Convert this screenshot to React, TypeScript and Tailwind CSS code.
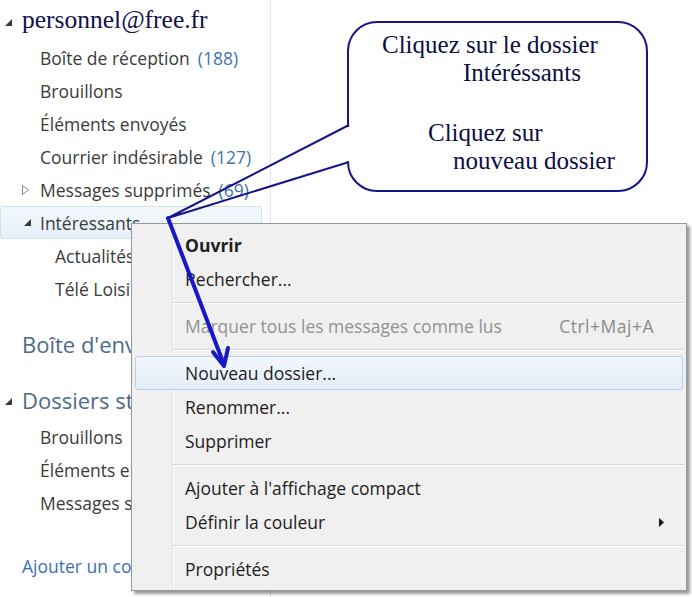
import React from "react";

function Expanded({ className }: { className?: string }) {
    return (
        <svg width="7" height="7" viewBox="0 0 7 7" className={className}>
            <polygon points="7,0 7,7 0,7" fill="#3a3a3a" />
        </svg>
    );
}

function Collapsed({ className }: { className?: string }) {
    return (
        <svg width="7" height="10" viewBox="0 0 7 10" className={className}>
            <polygon points="0.5,0.5 6.5,5 0.5,9.5" fill="none" stroke="#8a8a8a" strokeWidth="1" />
        </svg>
    );
}

function Row({ children, indent = "pl-[40px]", arrow }: { children: React.ReactNode; indent?: string; arrow?: React.ReactNode }) {
    return (
        <div className={`relative flex h-[33px] items-center ${indent} text-[17.5px] leading-[22px] text-[#3b3b3b]`}>
            {arrow}
            {children}
        </div>
    );
}

function Sidebar() {
    return (
        <div className="flex h-full w-[271px] flex-col border-r border-[#e4e7eb] bg-white">
            <div className="flex h-[41px] items-center pl-[5px] pb-[1px]">
                <Expanded className="mr-[10px] mt-[4px]" />
                <span className="font-['Liberation_Serif',serif] text-[25.5px] leading-[30px] text-[#10104e]">personnel@free.fr</span>
            </div>
            <Row>
                Boîte de réception <span className="ml-[8px] text-[#3f72b0]">(188)</span>
            </Row>
            <Row>Brouillons</Row>
            <Row>Éléments envoyés</Row>
            <Row>
                Courrier indésirable <span className="ml-[8px] text-[#3f72b0]">(127)</span>
            </Row>
            <Row arrow={<Collapsed className="absolute left-[22px] top-[12px]" />}>
                Messages supprimés <span className="ml-[8px] text-[#3f72b0]">(69)</span>
            </Row>
            <div className="relative mr-[8px] flex h-[33px] items-center rounded-[3px] border border-[#cfe0ef] bg-gradient-to-b from-[#f4f9fd] to-[#e6f0f9] pl-[39px] text-[17.5px] leading-[22px] text-[#3b3b3b]">
                <Expanded className="absolute left-[23px] top-[12px]" />
                Intéressants
            </div>
            <Row indent="pl-[55px]">Actualités</Row>
            <Row indent="pl-[55px]">Télé Loisirs</Row>
            <div className="mt-[19px] flex h-[40px] items-center pl-[22px] text-[22px] leading-[28px] text-[#4e6a85]">Boîte d'envoi</div>
            <div className="mt-[16px] flex h-[40px] items-center pl-[5px] text-[22px] leading-[28px] text-[#4e6a85]">
                <Expanded className="mr-[10px] mt-[3px]" />
                Dossiers stockage
            </div>
            <Row>Brouillons</Row>
            <Row>Éléments envoyés</Row>
            <Row>Messages supprimés</Row>
            <div className="mt-[30px] flex h-[33px] items-center pl-[22px] text-[17.5px] leading-[22px] text-[#3b70b2]">Ajouter un compte</div>
        </div>
    );
}

function Item({ children, bold, disabled, hot, right }: { children: React.ReactNode; bold?: boolean; disabled?: boolean; hot?: boolean; right?: React.ReactNode }) {
    return (
        <div
            className={`mx-[3px] flex h-[34px] items-center justify-between rounded-[3px] border pl-[49px] text-[17.5px] leading-[22px] ${
                hot ? "border-[#b3d0ee] bg-gradient-to-b from-[#f3f7fc] to-[#e4edf8]" : "border-transparent"
            } ${bold ? "font-bold" : ""} ${disabled ? "text-[#929292]" : "text-[#1e1e1e]"}`}
        >
            <span>{children}</span>
            {right}
        </div>
    );
}

function Sep() {
    return (
        <div className="flex h-[13px] items-center pl-[41px] pr-[2px]">
            <div className="h-[2px] w-full border-t border-b border-t-[#d7d7d7] border-b-white" />
        </div>
    );
}

function ContextMenu() {
    return (
        <div className="absolute left-[131px] top-[223px] w-[556px] border border-[#979797] bg-[#f0f0f0] py-[4px] shadow-[3px_3px_3px_rgba(0,0,0,0.4)]">
            <div className="absolute bottom-0 left-[40px] top-0 w-[2px] border-l border-r border-l-[#e2e3e3] border-r-white" />
            <div className="relative">
                <Item bold>Ouvrir</Item>
                <Item>Rechercher...</Item>
                <Sep />
                <Item disabled right={<span className="pr-[28px] tracking-[0.5px] text-[#8a8a8a]">Ctrl+Maj+A</span>}>
                    Marquer tous les messages comme lus
                </Item>
                <Sep />
                <Item hot>Nouveau dossier...</Item>
                <Item>Renommer...</Item>
                <Item>Supprimer</Item>
                <Sep />
                <Item>Ajouter à l'affichage compact</Item>
                <Item
                    right={
                        <svg width="5" height="9" viewBox="0 0 5 9" className="mr-[18px]">
                            <polygon points="0,0 5,4.5 0,9" fill="#1a1a1a" />
                        </svg>
                    }
                >
                    Définir la couleur
                </Item>
                <Sep />
                <Item>Propriétés</Item>
            </div>
        </div>
    );
}

function Callout() {
    return (
        <div className="absolute left-[347px] top-[21px] h-[171px] w-[301px] rounded-[30px] border-2 border-[#15158a] bg-white font-['Liberation_Serif',serif] text-[25px] leading-[28px] text-[#0d0d45]">
            <div className="pl-[33px] pt-[8px]">Cliquez sur le dossier</div>
            <div className="pl-[114px]">Intéréssants</div>
            <div className="pl-[79px] pt-[32px]">Cliquez sur</div>
            <div className="pl-[104px]">nouveau dossier</div>
        </div>
    );
}

export default function App() {
    return (
        <div className="relative h-[597px] w-[692px] overflow-hidden bg-white font-['Open_Sans',sans-serif]">
            <Sidebar />
            <ContextMenu />
            <Callout />
            <svg className="pointer-events-none absolute left-0 top-0" width="692" height="597">
                <rect x="345" y="127" width="6" height="34" fill="white" />
                <polyline points="349,125 168,218 349,162" fill="none" stroke="#15158a" strokeWidth="2" />
                <line x1="168" y1="218" x2="223" y2="362" stroke="#1818c8" strokeWidth="4" strokeLinecap="round" />
                <polyline points="213,352 224,366 228,348" fill="none" stroke="#1818c8" strokeWidth="4" strokeLinecap="round" strokeLinejoin="round" />
            </svg>
        </div>
    );
}
